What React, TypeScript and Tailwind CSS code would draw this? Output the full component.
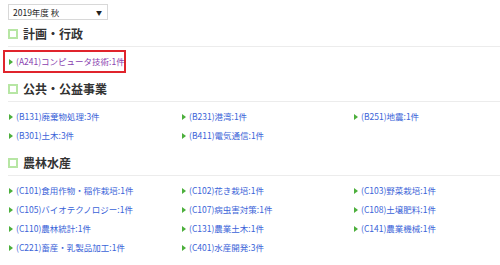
import React from 'react'

type Item = { code: string; name: string; count: number }

const sections: { title: string; items: Item[]; highlight?: boolean }[] = [
    {
        title: '計画・行政',
        highlight: true,
        items: [{ code: 'A241', name: 'コンピュータ技術', count: 1 }],
    },
    {
        title: '公共・公益事業',
        items: [
            { code: 'B131', name: '廃棄物処理', count: 3 },
            { code: 'B231', name: '港湾', count: 1 },
            { code: 'B251', name: '地震', count: 1 },
            { code: 'B301', name: '土木', count: 3 },
            { code: 'B411', name: '電気通信', count: 1 },
        ],
    },
    {
        title: '農林水産',
        items: [
            { code: 'C101', name: '食用作物・稲作栽培', count: 1 },
            { code: 'C102', name: '花き栽培', count: 1 },
            { code: 'C103', name: '野菜栽培', count: 1 },
            { code: 'C105', name: 'バイオテクノロジー', count: 1 },
            { code: 'C107', name: '病虫害対策', count: 1 },
            { code: 'C108', name: '土壌肥料', count: 1 },
            { code: 'C110', name: '農林統計', count: 1 },
            { code: 'C131', name: '農業土木', count: 1 },
            { code: 'C141', name: '農業機械', count: 1 },
            { code: 'C221', name: '畜産・乳製品加工', count: 1 },
            { code: 'C401', name: '水産開発', count: 3 },
        ],
    },
]

const font = { fontFamily: '"Noto Sans CJK JP", "Noto Sans", sans-serif' }

function Arrow() {
    return (
        <svg width="4" height="6" viewBox="0 0 4 6" className="mr-[3px] shrink-0">
            <path d="M0 0 L4 3 L0 6 Z" fill="#4caf3c" />
        </svg>
    )
}

function LinkItem({ item, visited }: { item: Item; visited?: boolean }) {
    return (
        <div className="flex items-center h-[19px] pl-[1px]">
            <Arrow />
            <a
                href="#"
                className={visited ? 'text-[8.5px] text-[#8a3fb0] whitespace-nowrap' : 'text-[8.5px] text-[#3a63d8] whitespace-nowrap'}
            >
                ({item.code}){item.name}:{item.count}件
            </a>
        </div>
    )
}

export default function App() {
    return (
        <div className="bg-white w-[500px] h-[265px] overflow-hidden pl-[8px] pt-[4px]" style={font}>
            {/* Year select */}
            <div className="flex items-center justify-between w-[100px] h-[16px] border border-[#d8d8d8] bg-white pl-[4px] pr-[5px] text-[8.5px] text-[#222]">
                <span>2019年度 秋</span>
                <span className="text-[6px]">▼</span>
            </div>

            {sections.map((section, si) => (
                <div key={section.title} className={si === 0 ? 'mt-[2px]' : si === 1 ? 'mt-[4px]' : 'mt-[6px]'}>
                    <div className="flex items-center h-[25px] border-b border-[#ececec]">
                        <span className="w-[10px] h-[10px] border-2 border-[#b7e6a4] mr-[5px] shrink-0" />
                        <h2 className="text-[12px] font-bold text-[#333]">{section.title}</h2>
                    </div>

                    {section.highlight ? (
                        <div className="mt-[3px] -ml-[5px] w-[123px] border-2 border-[#e0242c] pl-[3px]">
                            {section.items.map(item => (
                                <LinkItem key={item.code} item={item} visited />
                            ))}
                        </div>
                    ) : (
                        <div className="mt-[5px] grid grid-cols-[173px_172px_172px]">
                            {section.items.map(item => (
                                <LinkItem key={item.code} item={item} />
                            ))}
                        </div>
                    )}
                </div>
            ))}
        </div>
    )
}
